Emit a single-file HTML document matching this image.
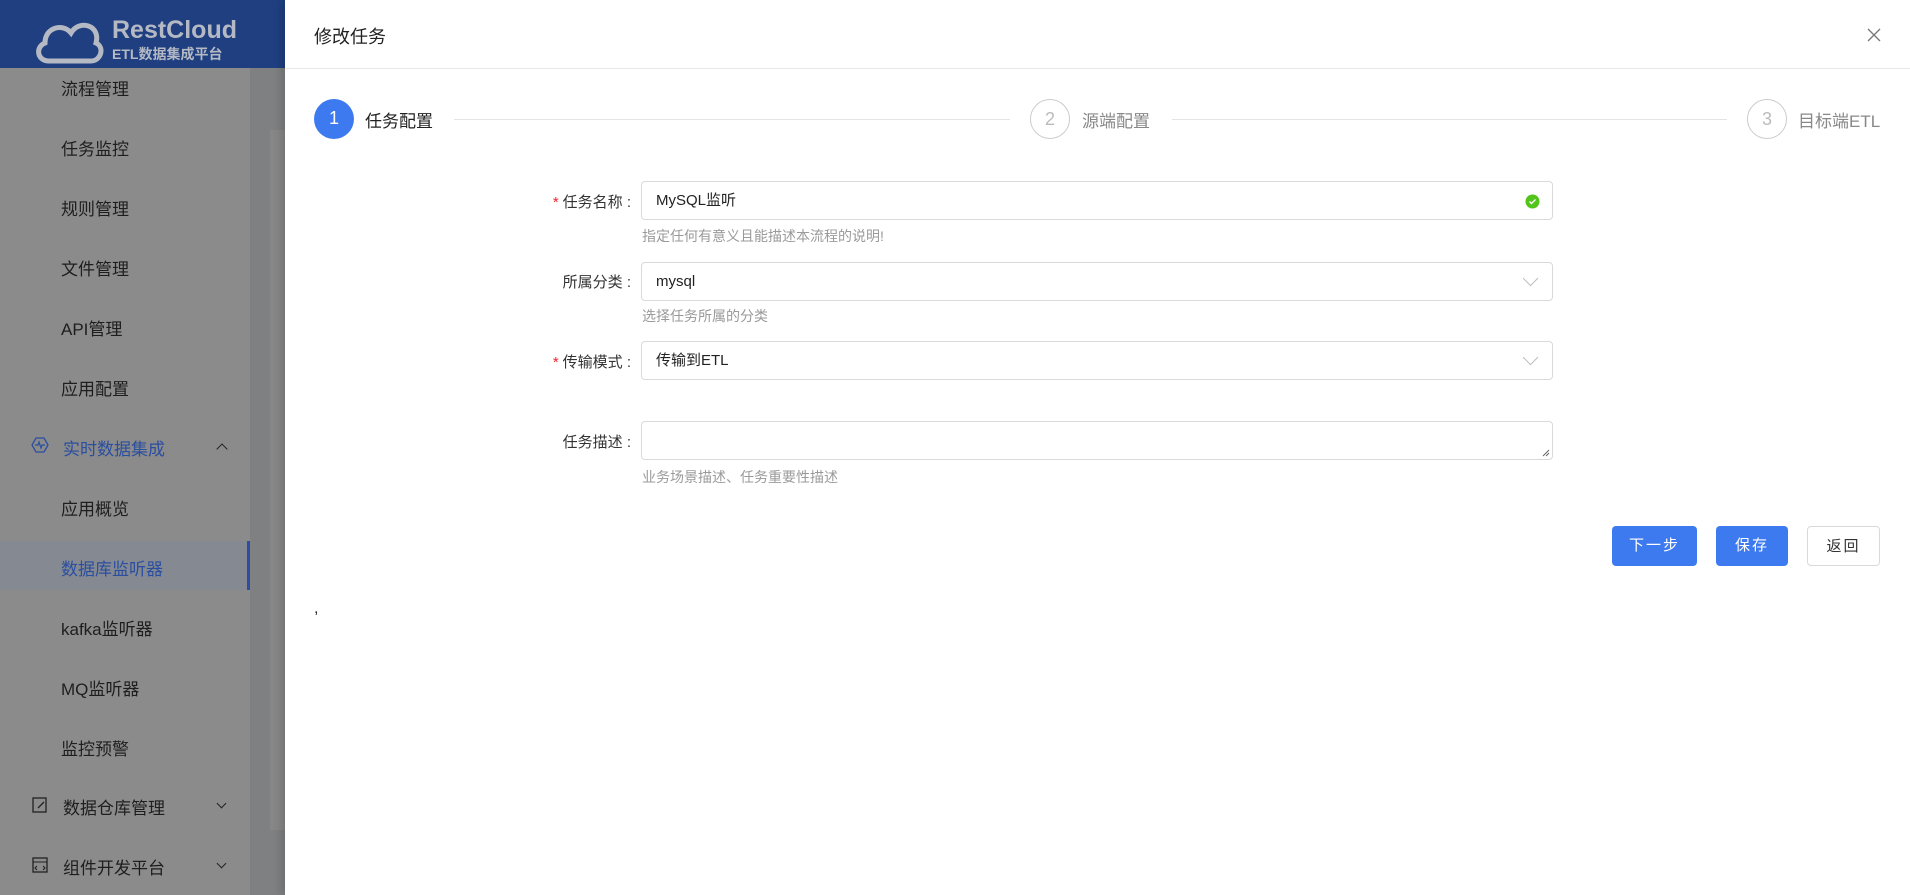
<!DOCTYPE html>
<html><head><meta charset="utf-8"><style>
*{margin:0;padding:0;box-sizing:border-box}
body{width:1910px;height:895px;overflow:hidden;position:relative;background:#fff;font-family:"Liberation Sans","Noto Sans CJK SC",sans-serif;color:#262626}
#side{position:absolute;left:0;top:0;width:285px;height:895px;background:#7f8081}
#menu{position:absolute;left:0;top:0;width:250px;height:895px;background:#8b8b8b}
#panel{position:absolute;left:270px;top:130px;width:15px;height:700px;background:#878787}
#hdr{position:absolute;left:0;top:0;width:285px;height:68px;background:#1f3f80}
.logo{position:absolute;left:112px;top:16px;color:#b4b9c4;font-size:25px;font-weight:bold;line-height:28px}
.logo2{position:absolute;left:112px;top:44px;color:#b4b9c4;font-size:14px;font-weight:bold}
.mi{position:absolute;left:61px;font-size:17px;color:#1e1e1e}
.gi{position:absolute;left:63px;font-size:17px;color:#1e1e1e}
.sel{position:absolute;left:0;top:541px;width:250px;height:49px;background:#858a92;border-right:3px solid #2a4ea0}
.ar{position:absolute;left:218px;width:8px;height:8px;border-left:1.6px solid #222;border-top:1.6px solid #222}
#dr{position:absolute;left:285px;top:0;width:1625px;height:895px;background:#fff;box-shadow:-4px 0 8px rgba(0,0,0,.15)}
.t{position:absolute;font-size:18px;color:#222}
.hl{position:absolute;left:0;top:68px;width:1625px;height:1px;background:#e8e8e8}
.c{position:absolute;top:99px;width:40px;height:40px;border-radius:50%;text-align:center;line-height:38px;font-size:18px}
.ln{position:absolute;top:119px;height:1px;background:#e4e4e4}
.lb{position:absolute;font-size:15px;color:#333;text-align:right;width:200px}
.req{color:#f5222d;margin-right:4px}
.in{position:absolute;left:356px;width:912px;height:39px;border:1px solid #d9d9d9;border-radius:4px;font-size:15px;padding-left:14px;line-height:38px;color:#222}
.hint{position:absolute;left:357px;font-size:14px;color:#9a9a9a}
.btn{position:absolute;top:526px;height:40px;border-radius:4px;font-size:15px;text-align:center;line-height:40px;letter-spacing:2px}
.chev{position:absolute;right:16px;top:10px;width:11px;height:11px;border-right:1px solid #bbb;border-bottom:1px solid #bbb;transform:rotate(45deg)}
</style></head><body>
<div id="side">
<div id="menu"></div><div id="panel"></div>
<div id="hdr">
<svg style="position:absolute;left:33px;top:17px" width="72" height="48" viewBox="0 0 72 48"><path d="M16 44 C4 44 2 30 12 26 C12 10 30 6 38 16 C46 2 68 8 63 26 C72 30 68 44 58 44 Z" fill="none" stroke="#b4b9c4" stroke-width="5"/></svg>
<div class="logo">RestCloud</div><div class="logo2">ETL数据集成平台</div>
</div>
<div class="mi" style="top:75px">流程管理</div>
<div class="mi" style="top:135px">任务监控</div>
<div class="mi" style="top:195px">规则管理</div>
<div class="mi" style="top:255px">文件管理</div>
<div class="mi" style="top:315px">API管理</div>
<div class="mi" style="top:375px">应用配置</div>
<svg style="position:absolute;left:31px;top:436px" width="18" height="18" viewBox="0 0 18 18"><path d="M5 2h8l4 7-4 7H5L1 9z" fill="none" stroke="#2a4ea0" stroke-width="1.3"/><path d="M4 9h3l1-3 2 6 1-3h3" fill="none" stroke="#2a4ea0" stroke-width="1.2"/></svg>
<div class="gi" style="top:435px;color:#2a4ea0">实时数据集成</div>
<div class="ar" style="top:445px;transform:rotate(45deg)"></div>
<div class="mi" style="top:495px">应用概览</div>
<div class="sel"></div>
<div class="mi" style="top:555px;color:#2a4ea0">数据库监听器</div>
<div class="mi" style="top:615px">kafka监听器</div>
<div class="mi" style="top:675px">MQ监听器</div>
<div class="mi" style="top:735px">监控预警</div>
<svg style="position:absolute;left:31px;top:796px" width="18" height="18" viewBox="0 0 18 18"><rect x="2" y="2" width="13" height="14" fill="none" stroke="#222" stroke-width="1.3"/><path d="M7 12l6-6" stroke="#222" stroke-width="1.3"/></svg>
<div class="gi" style="top:794px">数据仓库管理</div>
<div class="ar" style="top:800px;transform:rotate(225deg);width:7px;height:7px"></div>
<svg style="position:absolute;left:31px;top:856px" width="18" height="18" viewBox="0 0 18 18"><rect x="2" y="2" width="14" height="14" fill="none" stroke="#222" stroke-width="1.3"/><path d="M2 6h14M6 10l-2 2 2 2M12 10l2 2-2 2" fill="none" stroke="#222" stroke-width="1.1"/></svg>
<div class="gi" style="top:854px">组件开发平台</div>
<div class="ar" style="top:860px;transform:rotate(225deg);width:7px;height:7px"></div>
</div>
<div id="dr">
<div class="t" style="left:29px;top:23px">修改任务</div>
<svg style="position:absolute;left:1582px;top:28px" width="14" height="14"><path d="M1 1l12 12M13 1L1 13" stroke="#777" stroke-width="1.3"/></svg>
<div class="hl"></div>
<div class="c" style="left:29px;background:#3d7af0;color:#fff">1</div>
<div class="t" style="left:80px;top:107px;font-size:17px;color:#222">任务配置</div>
<div class="ln" style="left:169px;width:556px"></div>
<div class="c" style="left:745px;border:1px solid #ccc;color:#bbb">2</div>
<div class="t" style="left:797px;top:107px;font-size:17px;color:#888">源端配置</div>
<div class="ln" style="left:887px;width:555px"></div>
<div class="c" style="left:1462px;border:1px solid #ccc;color:#bbb">3</div>
<div class="t" style="left:1513px;top:107px;font-size:17px;color:#888">目标端ETL</div>

<div class="lb" style="left:146px;top:191px"><span class="req">*</span>任务名称 :</div>
<div class="in" style="top:181px">MySQL监听<svg style="position:absolute;right:12px;top:12px" width="15" height="15"><circle cx="7.5" cy="7.5" r="7" fill="#52c41a"/><path d="M4.5 7.5l2 2 4-4" fill="none" stroke="#fff" stroke-width="1.4"/></svg></div>
<div class="hint" style="top:226px">指定任何有意义且能描述本流程的说明!</div>
<div class="lb" style="left:146px;top:271px">所属分类 :</div>
<div class="in" style="top:262px">mysql<div class="chev"></div></div>
<div class="hint" style="top:306px">选择任务所属的分类</div>
<div class="lb" style="left:146px;top:351px"><span class="req">*</span>传输模式 :</div>
<div class="in" style="top:341px">传输到ETL<div class="chev"></div></div>
<div class="lb" style="left:146px;top:431px">任务描述 :</div>
<div class="in" style="top:421px"><svg style="position:absolute;right:2px;bottom:2px" width="8" height="8"><path d="M7 1L1 7M7 4L4 7" stroke="#666" stroke-width="1"/></svg></div>
<div class="hint" style="top:467px">业务场景描述、任务重要性描述</div>
<div class="btn" style="left:1327px;width:85px;background:#3d7af0;color:#fff">下一步</div>
<div class="btn" style="left:1431px;width:72px;background:#3d7af0;color:#fff">保存</div>
<div class="btn" style="left:1522px;width:73px;border:1px solid #d9d9d9;color:#333">返回</div>
<div style="position:absolute;left:29px;top:600px;font-size:16px">,</div>
</div>
</body></html>
